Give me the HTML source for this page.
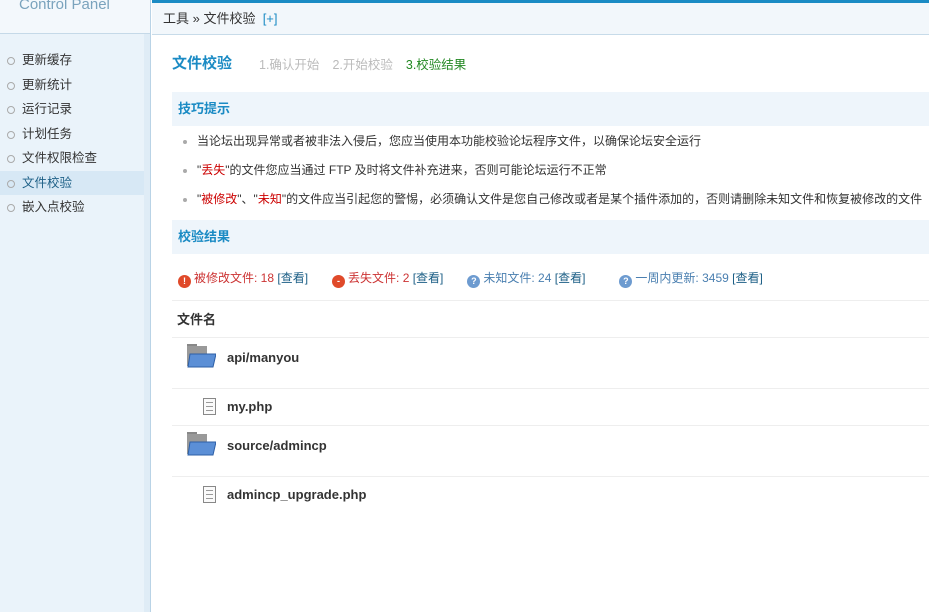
<!DOCTYPE html>
<html><head><meta charset="utf-8"><style>
*{margin:0;padding:0;box-sizing:border-box}
body{width:929px;height:612px;overflow:hidden;background:#fff;font-family:"Liberation Sans","Noto Sans CJK SC",sans-serif;font-size:12px;color:#333;position:relative}
#side{position:absolute;left:0;top:0;width:151px;height:612px;background:#eaf3fa;border-right:1px solid #b9d3e6}
#side .logo{height:34px;border-bottom:1px solid #c5d9e8;color:#7aa3bd;font-size:15px;padding-left:19px;line-height:10px;background:#f3f8fc}
#side .strip{position:absolute;right:0;top:34px;width:6px;height:578px;background:#dfecf6}
#side ul{list-style:none;margin-top:14px}
#side li{height:24.5px;line-height:24px;padding-left:22px;position:relative;font-size:12.5px;color:#333}
#side li:before{content:"";position:absolute;left:7px;top:9px;width:6px;height:6px;border:1px solid #aaa;border-radius:50%}
#side li.on{background:#d7e8f5;color:#1c5f86;margin-right:6px}
#top{position:absolute;left:152px;top:0;right:0;height:35px;border-top:3px solid #1b8bc4;background:#f2f7fb;border-bottom:1px solid #c7dbe9;padding-left:11px;line-height:32px;font-size:13px}
#main{position:absolute;left:172px;top:35px;right:0}
h3{font-size:15px;color:#1b8bc4;font-weight:bold;display:inline-block}
.bar{background:#eef5fb;height:34px;line-height:34px;padding-left:6px;font-weight:bold;color:#1b8bc4;font-size:13px}
.tip{height:29px;line-height:31px;padding-left:25px;position:relative;font-size:12px;white-space:nowrap}
.tip:before{content:"";position:absolute;left:11px;top:14px;width:4px;height:4px;background:#aaa;border-radius:50%}
.red{color:#c00}
.sum{padding-left:6px;border-bottom:1px solid #eee;font-size:12px;white-space:nowrap}
.sum span{margin-right:12px}
.ic{display:inline-block;width:13px;height:13px;border-radius:50%;vertical-align:-2px;margin-right:3px;color:#fff;font-size:9px;line-height:13px;text-align:center;font-weight:bold;font-style:normal}
.row{border-bottom:1px solid #eee;position:relative;font-weight:bold;font-size:13px;color:#333}
.fold{position:absolute;left:14px;top:6px;width:30px;height:24px}
.file{position:absolute;left:31px;width:13px;height:17px;border:1px solid #888;background:#fafafa}
.file i{display:block;height:1px;background:#999;margin:3px 2px 0}
</style></head><body>
<div id="side"><div class="logo">Control Panel</div><div class="strip"></div>
<ul><li>更新缓存</li><li>更新统计</li><li>运行记录</li><li>计划任务</li><li>文件权限检查</li><li class="on">文件校验</li><li>嵌入点校验</li></ul></div>
<div id="top">工具 » 文件校验 &nbsp;<span style="color:#1b8bc4">[+]</span></div>
<div id="main">
<div style="height:57px;position:relative"><h3 style="position:absolute;top:17px">文件校验</h3>
<div style="position:absolute;left:87px;top:19px;font-size:12.5px"><span style="color:#bbb;margin-right:13px">1.确认开始</span><span style="color:#bbb;margin-right:13px">2.开始校验</span><span style="color:#282">3.校验结果</span></div></div>
<div class="bar">技巧提示</div>
<div class="tip">当论坛出现异常或者被非法入侵后，您应当使用本功能校验论坛程序文件，以确保论坛安全运行</div>
<div class="tip">"<span class="red">丢失</span>"的文件您应当通过 FTP 及时将文件补充进来，否则可能论坛运行不正常</div>
<div class="tip">"<span class="red">被修改</span>"、"<span class="red">未知</span>"的文件应当引起您的警惕，必须确认文件是您自己修改或者是某个插件添加的，否则请删除未知文件和恢复被修改的文件</div>
<div class="bar" style="margin-top:7px">校验结果</div>
<div class="sum" style="line-height:49px;height:47px"><span style="color:#c33"><i class="ic" style="background:#e04a2a">!</i>被修改文件: 18 <span style="color:#1c5f86">[查看]</span></span><span style="color:#c33"><i class="ic" style="background:#e04a2a">-</i>丢失文件: 2 <span style="color:#1c5f86">[查看]</span></span><span style="color:#4a7fb0;margin-right:22px"><i class="ic" style="background:#6d9bd0">?</i>未知文件: 24 <span style="color:#1c5f86">[查看]</span></span><span style="color:#4a7fb0"><i class="ic" style="background:#6d9bd0">?</i>一周内更新: 3459 <span style="color:#1c5f86">[查看]</span></span></div>
<div class="row" style="height:37px;line-height:37px;padding-left:5px">文件名</div>
<div class="row" style="height:51px"><svg class="fold" viewBox="0 0 30 24"><rect x="1" y="0" width="10" height="4" fill="#888"/><rect x="1" y="2" width="20" height="20" fill="#999"/><path d="M4 10 H30 L27 23 H2 Z" fill="#5b8fd6" stroke="#2d5fa6"/></svg><span style="position:absolute;left:55px;top:12px">api/manyou</span></div>
<div class="row" style="height:37px"><div class="file" style="top:9px"><i></i><i></i><i></i></div><span style="position:absolute;left:55px;top:10px">my.php</span></div>
<div class="row" style="height:51px"><svg class="fold" viewBox="0 0 30 24"><rect x="1" y="0" width="10" height="4" fill="#888"/><rect x="1" y="2" width="20" height="20" fill="#999"/><path d="M4 10 H30 L27 23 H2 Z" fill="#5b8fd6" stroke="#2d5fa6"/></svg><span style="position:absolute;left:55px;top:12px">source/admincp</span></div>
<div style="height:37px;position:relative;font-weight:bold;font-size:13px"><div class="file" style="top:9px"><i></i><i></i><i></i></div><span style="position:absolute;left:55px;top:10px">admincp_upgrade.php</span></div>
</div>
</body></html>
